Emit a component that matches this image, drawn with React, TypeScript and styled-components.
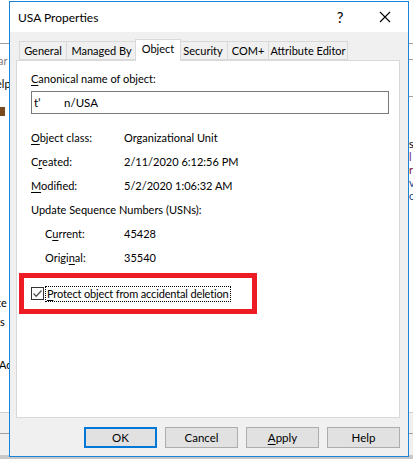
import React, { useState } from "react";
import styled, { createGlobalStyle } from "styled-components";

const GlobalStyle = createGlobalStyle`
  html, body {
    margin: 0;
    padding: 0;
    background: #ffffff;
    overflow: hidden;
  }
  * {
    box-sizing: border-box;
  }
`;

const Desktop = styled.div`
  position: relative;
  width: 413px;
  height: 459px;
  background: #ffffff;
  font-family: Lato, "Liberation Sans", sans-serif;
  font-size: 11px;
  color: #000000;
  overflow: hidden;
`;

// pieces of the window lying behind the dialog
const BackLine = styled.div<{ top: number; left: number; width: number }>`
  position: absolute;
  top: ${(p) => p.top}px;
  left: ${(p) => p.left}px;
  width: ${(p) => p.width}px;
  height: 1px;
  background: #a0a0a0;
`;

const BackText = styled.div<{ top: number; left: number; color?: string }>`
  position: absolute;
  top: ${(p) => p.top}px;
  left: ${(p) => p.left}px;
  color: ${(p) => p.color || "#000000"};
  font-size: 11px;
  line-height: 12px;
  white-space: nowrap;
`;

const BackBlock = styled.div`
  position: absolute;
  top: 107px;
  left: 0;
  width: 5px;
  height: 9px;
  background: #7a4a1e;
`;

const BackBand = styled.div`
  position: absolute;
  left: 0;
  right: 0;
  top: 412px;
  height: 47px;
  background: #f0f0f0;
  border-top: 1px solid #d0d0d0;

  &::after {
    content: "";
    position: absolute;
    left: 0;
    right: 0;
    top: 20px;
    height: 1px;
    background: #a0a0a0;
  }
`;

const BottomStrip = styled.div`
  position: absolute;
  left: 0;
  right: 0;
  bottom: 0;
  height: 4px;
  background: #c8c8c8;
`;

const Dialog = styled.div`
  position: absolute;
  left: 9px;
  top: 1px;
  width: 400px;
  height: 456px;
  border: 1px solid #1883d7;
  background: #f0f0f0;
  display: flex;
  flex-direction: column;
`;

const TitleBar = styled.div`
  height: 30px;
  background: #ffffff;
  display: flex;
  align-items: center;
  padding-left: 8px;
`;

const Title = styled.div`
  flex: 1;
  font-size: 12px;
  padding-top: 1px;
`;

const TitleButton = styled.div<{ wide?: boolean }>`
  width: ${(p) => (p.wide ? "46px" : "44px")};
  height: 30px;
  display: flex;
  align-items: center;
  justify-content: center;
  font-size: 15px;
`;

const Body = styled.div`
  flex: 1;
  display: flex;
  flex-direction: column;
  padding: 7px 8px 0 6px;
`;

const TabRow = styled.div`
  display: flex;
  align-items: flex-end;
  height: 21px;
  padding-left: 3px;
  position: relative;
  z-index: 1;
`;

const Tab = styled.div<{ active?: boolean; w: number }>`
  width: ${(p) => p.w}px;
  height: ${(p) => (p.active ? "22px" : "19px")};
  margin: ${(p) => (p.active ? "0 -2px -1px -2px" : "0")};
  background: ${(p) => (p.active ? "#ffffff" : "#f0f0f0")};
  border: 1px solid #d9d9d9;
  border-left: ${(p) => (p.active ? "1px solid #d9d9d9" : "none")};
  border-bottom: ${(p) => (p.active ? "none" : "1px solid #d9d9d9")};
  display: flex;
  align-items: ${(p) => (p.active ? "flex-start" : "center")};
  padding-top: ${(p) => (p.active ? "2px" : "0")};
  justify-content: center;
  white-space: nowrap;
  position: relative;
  z-index: ${(p) => (p.active ? 2 : 1)};

  &:first-child {
    border-left: 1px solid #d9d9d9;
  }
`;

const Panel = styled.div`
  height: 358px;
  background: #ffffff;
  border: 1px solid #d9d9d9;
  padding: 10px 11px 0 14px;
  display: flex;
  flex-direction: column;
`;

const FieldLabel = styled.div`
  height: 16px;
  line-height: 16px;
`;

const Mnemonic = styled.span`
  text-decoration: underline;
  text-underline-offset: 2px;
`;

const TextBox = styled.div`
  margin-top: 4px;
  width: 358px;
  height: 23px;
  border: 1px solid #7a7a7a;
  padding: 0 2px;
  display: flex;
  align-items: center;
  white-space: pre;
  font-size: 11.5px;
`;

const InfoTable = styled.div`
  margin-top: 15px;
  display: flex;
  flex-direction: column;
  gap: 7px;
`;

const InfoRow = styled.div<{ indent?: boolean }>`
  display: grid;
  grid-template-columns: ${(p) => (p.indent ? "79px" : "93px")} 1fr;
  padding-left: ${(p) => (p.indent ? "14px" : "0")};
  height: 17px;
  line-height: 17px;
  white-space: nowrap;
`;

const SectionLabel = styled.div`
  height: 17px;
  line-height: 17px;
  white-space: nowrap;
`;

const Highlight = styled.div`
  margin: 7px 0 0 -12px;
  width: 238px;
  height: 41px;
  border: 5px solid #ed1c24;
  display: flex;
  align-items: center;
  padding-left: 7px;
`;

const CheckLabel = styled.label`
  display: flex;
  align-items: center;
  gap: 2px;
  cursor: default;
  white-space: nowrap;
`;

const Box = styled.span`
  width: 13px;
  height: 13px;
  border: 1px solid #333333;
  background: #ffffff;
  display: flex;
  align-items: center;
  justify-content: center;
`;

const FocusText = styled.span`
  outline: 1px dotted #000000;
  padding: 0 1px;
  line-height: 13px;
  height: 14px;
  letter-spacing: -0.15px;
`;

const ButtonRow = styled.div`
  display: flex;
  justify-content: flex-end;
  gap: 8px;
  padding-top: 9px;
`;

const Button = styled.button<{ primary?: boolean }>`
  width: 73px;
  height: 21px;
  font-family: inherit;
  font-size: 11.5px;
  color: #000000;
  background: #e1e1e1;
  border: ${(p) => (p.primary ? "2px solid #0078d7" : "1px solid #adadad")};
  padding: 0;
  display: flex;
  align-items: center;
  justify-content: center;
`;

const tabs = [
  { name: "General", w: 48 },
  { name: "Managed By", w: 70 },
  { name: "Object", w: 46, active: true },
  { name: "Security", w: 49 },
  { name: "COM+", w: 41 },
  { name: "Attribute Editor", w: 79 },
];

function CloseIcon() {
  return (
    <svg width="12" height="12" viewBox="0 0 12 12">
      <path d="M1 1 L11 11 M11 1 L1 11" stroke="#000000" strokeWidth="1.1" />
    </svg>
  );
}

function App() {
  const [isProtected, setIsProtected] = useState(true);

  return (
    <Desktop>
      <GlobalStyle />
      <BackLine top={43} left={0} width={9} />
      <BackText top={55} left={-2} color="#808080">
        ar
      </BackText>
      <BackText top={78} left={-4}>
        elp
      </BackText>
      <BackBlock />
      <BackText top={297} left={-3}>
        te
      </BackText>
      <BackText top={316} left={0}>
        s
      </BackText>
      <BackText top={359} left={-1}>
        Ac
      </BackText>
      <BackBand />
      <BottomStrip />
      <BackLine top={43} left={409} width={4} />
      <BackLine top={59} left={409} width={4} />
      <BackLine top={96} left={409} width={4} />
      <BackText top={138} left={409}>
        s
      </BackText>
      <BackText top={151} left={409} color="#7b2d8b">
        l
      </BackText>
      <BackText top={164} left={409} color="#7a1030">
        r
      </BackText>
      <BackText top={177} left={409} color="#1a4a8a">
        v
      </BackText>
      <BackText top={190} left={409} color="#1a4a8a">
        c
      </BackText>

      <Dialog>
        <TitleBar>
          <Title>USA Properties</Title>
          <TitleButton>?</TitleButton>
          <TitleButton wide>
            <CloseIcon />
          </TitleButton>
        </TitleBar>
        <Body>
          <TabRow>
            {tabs.map((t) => (
              <Tab key={t.name} active={t.active} w={t.w}>
                {t.name}
              </Tab>
            ))}
          </TabRow>
          <Panel>
            <FieldLabel>
              <Mnemonic>C</Mnemonic>anonical name of object:
            </FieldLabel>
            <TextBox>{"t\u2019        n/USA"}</TextBox>
            <InfoTable>
              <InfoRow>
                <span>
                  <Mnemonic>O</Mnemonic>bject class:
                </span>
                <span>Organizational Unit</span>
              </InfoRow>
              <InfoRow>
                <span>
                  C<Mnemonic>r</Mnemonic>eated:
                </span>
                <span>2/11/2020 6:12:56 PM</span>
              </InfoRow>
              <InfoRow>
                <span>
                  <Mnemonic>M</Mnemonic>odified:
                </span>
                <span>5/2/2020 1:06:32 AM</span>
              </InfoRow>
              <SectionLabel>Update Sequence Numbers (USNs):</SectionLabel>
              <InfoRow indent>
                <span>
                  C<Mnemonic>u</Mnemonic>rrent:
                </span>
                <span>45428</span>
              </InfoRow>
              <InfoRow indent>
                <span>
                  Origi<Mnemonic>n</Mnemonic>al:
                </span>
                <span>35540</span>
              </InfoRow>
            </InfoTable>
            <Highlight>
              <CheckLabel onClick={() => setIsProtected(!isProtected)}>
                <Box>
                  {isProtected && (
                    <svg width="11" height="11" viewBox="0 0 11 11">
                      <path d="M1.5 5.5 L4.2 8.2 L9.5 2.5" fill="none" stroke="#555555" strokeWidth="1.3" />
                    </svg>
                  )}
                </Box>
                <FocusText>
                  <Mnemonic>P</Mnemonic>rotect object from accidental deletion
                </FocusText>
              </CheckLabel>
            </Highlight>
          </Panel>
          <ButtonRow>
            <Button primary>OK</Button>
            <Button>Cancel</Button>
            <Button>
              <Mnemonic>A</Mnemonic>pply
            </Button>
            <Button>Help</Button>
          </ButtonRow>
        </Body>
      </Dialog>
    </Desktop>
  );
}

export default App;
